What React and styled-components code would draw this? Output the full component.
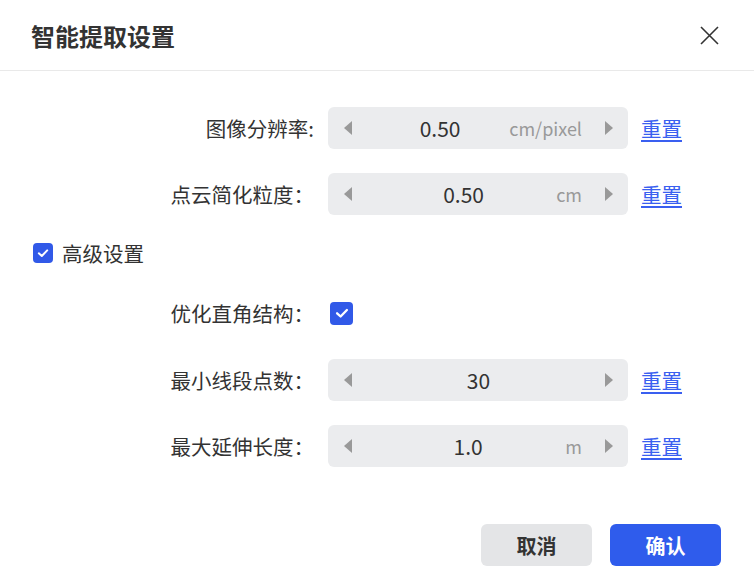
import styled, { createGlobalStyle } from "styled-components";

const GlobalStyle = createGlobalStyle`
  html, body {
    margin: 0;
    padding: 0;
    background: #fff;
  }
  body {
    font-family: "Noto Sans CJK SC", "Noto Sans", sans-serif;
    color: #333;
  }
`;

const Dialog = styled.div`
  width: 754px;
  height: 584px;
  display: flex;
  flex-direction: column;
  background: #fff;
`;

const Header = styled.div`
  height: 70px;
  border-bottom: 1px solid #e9e9e9;
  display: flex;
  align-items: center;
  justify-content: space-between;
  padding: 0 35px 0 31px;
`;

const Title = styled.h1`
  margin: 0;
  font-size: 24px;
  font-weight: 700;
  color: #333;
`;

const CloseButton = styled.button`
  border: 0;
  background: none;
  padding: 0;
  width: 20px;
  height: 20px;
  display: flex;
  align-items: center;
  justify-content: center;
  cursor: pointer;
`;

const Body = styled.div`
  flex: 1;
  padding-top: 36px;
  display: flex;
  flex-direction: column;
`;

const Row = styled.div`
  display: flex;
  align-items: center;
  height: 42px;
  margin-top: ${({ $mt }) => $mt || 0}px;
  padding-left: ${({ $pl }) => ($pl == null ? 31 : $pl)}px;
`;

const Label = styled.div`
  width: 283px;
  text-align: right;
  font-size: 20.5px;
  color: #333;
  white-space: nowrap;
  margin-right: 14px;
`;

const Stepper = styled.div`
  width: 300px;
  height: 42px;
  border-radius: 6px;
  background: #ebecee;
  display: flex;
  align-items: center;
  padding: 0 15px 0 16px;
  box-sizing: border-box;
`;

const ArrowBtn = styled.span`
  display: flex;
  width: 8px;
  height: 14px;
  flex: none;
`;

const Value = styled.div`
  flex: 1;
  text-align: center;
  font-size: 21px;
  color: #333;
  margin-left: 23px;
`;

const Unit = styled.span`
  font-size: 18px;
  color: #999;
  margin-left: 4px;
`;

const Spacer = styled.span`
  width: 23px;
  flex: none;
`;

const ResetLink = styled.a`
  margin-left: 13px;
  font-size: 20.5px;
  color: #3a5ff0;
  text-decoration: underline;
  text-underline-offset: 3px;
  cursor: pointer;
`;

const Box = styled.span`
  width: ${({ $size }) => $size}px;
  height: ${({ $size }) => $size}px;
  margin-left: ${({ $ml }) => $ml || 0}px;
  border-radius: 4px;
  background: #3159e8;
  display: flex;
  align-items: center;
  justify-content: center;
  flex: none;
`;

const CheckText = styled.span`
  font-size: 20.5px;
  color: #333;
  margin-left: 9px;
`;

const Footer = styled.div`
  display: flex;
  justify-content: flex-end;
  gap: 18px;
  padding: 0 33px 18px 0;
`;

const Button = styled.button`
  width: 111px;
  height: 42px;
  border: 0;
  border-radius: 6px;
  font-family: inherit;
  font-size: 20px;
  font-weight: 700;
  cursor: pointer;
  background: ${({ $primary }) => ($primary ? "#2f5cec" : "#e4e5e7")};
  color: ${({ $primary }) => ($primary ? "#fff" : "#333")};
`;

function Arrow({ dir }) {
  return (
    <ArrowBtn>
      <svg width="8" height="14" viewBox="0 0 8 14">
        {dir === "left" ? (
          <polygon points="8,0 8,14 0,7" fill="#999" />
        ) : (
          <polygon points="0,0 0,14 8,7" fill="#999" />
        )}
      </svg>
    </ArrowBtn>
  );
}

function Check({ size, ml }) {
  const s = Math.round(size * 0.62);
  return (
    <Box $size={size} $ml={ml}>
      <svg width={s} height={s} viewBox="0 0 12 12">
        <polyline
          points="1.8,6.3 4.8,9 10.2,3.4"
          fill="none"
          stroke="#fff"
          strokeWidth="2"
          strokeLinecap="round"
          strokeLinejoin="round"
        />
      </svg>
    </Box>
  );
}

function NumberField({ label, value, unit, mt }) {
  return (
    <Row $mt={mt}>
      <Label>{label}</Label>
      <Stepper>
        <Arrow dir="left" />
        <Value>{value}</Value>
        {unit && <Unit>{unit}</Unit>}
        <Spacer />
        <Arrow dir="right" />
      </Stepper>
      <ResetLink>重置</ResetLink>
    </Row>
  );
}

export default function App() {
  return (
    <>
      <GlobalStyle />
      <Dialog>
        <Header>
          <Title>智能提取设置</Title>
          <CloseButton>
            <svg width="19" height="19" viewBox="0 0 19 19">
              <path d="M1 1 L18 18 M18 1 L1 18" stroke="#333" strokeWidth="1.6" />
            </svg>
          </CloseButton>
        </Header>
        <Body>
          <NumberField label="图像分辨率:" value="0.50" unit="cm/pixel" />
          <NumberField label="点云简化粒度：" value="0.50" unit="cm" mt={24} />
          <Row $mt={17} $pl={33}>
            <Check size={20} />
            <CheckText>高级设置</CheckText>
          </Row>
          <Row $mt={18}>
            <Label>优化直角结构：</Label>
            <Check size={23} ml={2} />
          </Row>
          <NumberField label="最小线段点数：" value="30" mt={25} />
          <NumberField label="最大延伸长度：" value="1.0" unit="m" mt={24} />
        </Body>
        <Footer>
          <Button>取消</Button>
          <Button $primary>确认</Button>
        </Footer>
      </Dialog>
    </>
  );
}
